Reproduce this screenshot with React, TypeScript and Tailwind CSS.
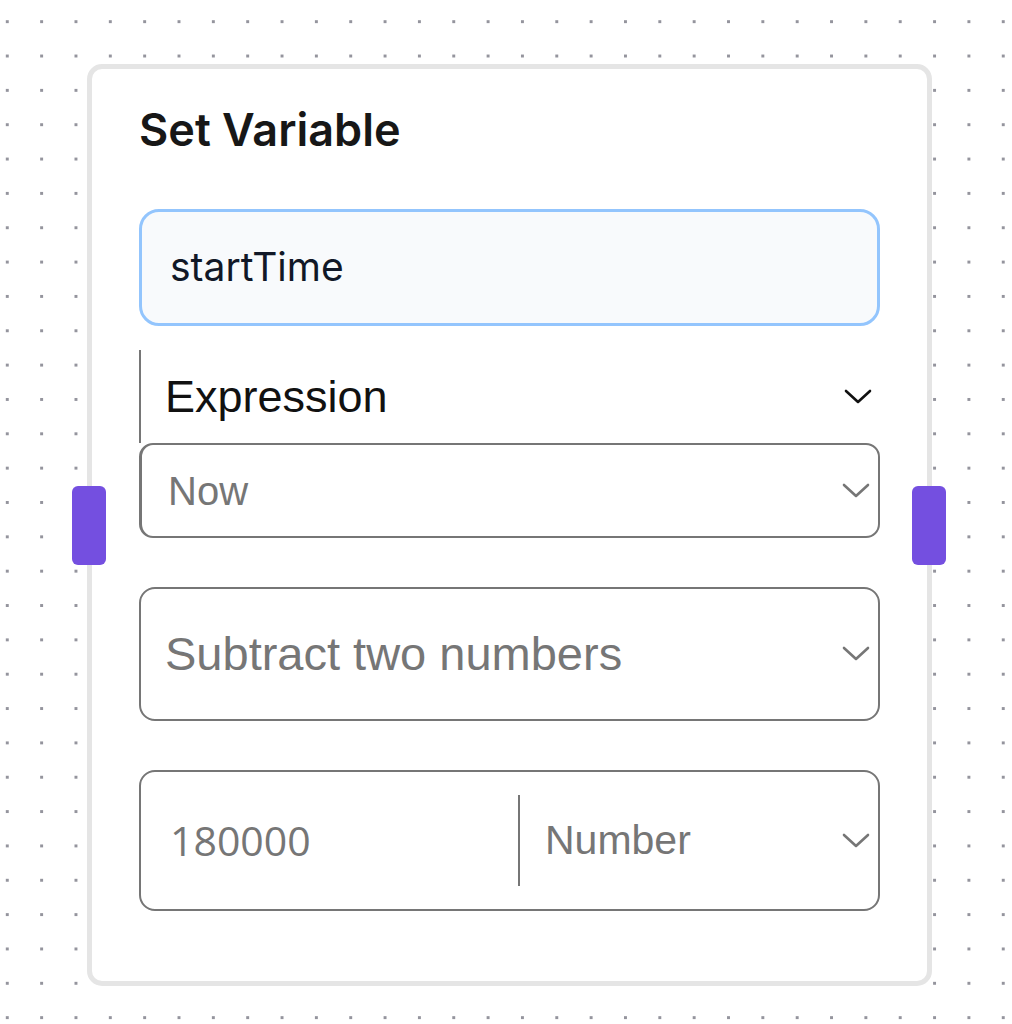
import type { ReactNode } from "react";

// Chevron used by the native-looking selects in the node.
function Chevron({ dark = false }: { dark?: boolean }) {
  return (
    <svg width="28" height="16" viewBox="0 0 28 16" fill="none" className="shrink-0">
      <polyline
        points="2,2 14,13 26,2"
        stroke={dark ? "#111111" : "#767676"}
        strokeWidth="2.6"
        strokeLinecap="round"
        strokeLinejoin="round"
      />
    </svg>
  );
}

function SelectBox({
  children,
  className,
  textClass,
}: {
  children: ReactNode;
  className: string;
  textClass: string;
}) {
  return (
    <div
      className={[
        "flex items-center justify-between border-2 border-[#767676] bg-white",
        className,
      ].join(" ")}
    >
      <span className={textClass}>{children}</span>
      <Chevron />
    </div>
  );
}

export default function App() {
  return (
    <div className="h-[1024px] w-[1012px] overflow-hidden bg-white bg-[radial-gradient(circle,#94949d_1.6px,transparent_1.9px)] bg-[length:34.35px_34.35px] bg-[position:-9.9px_4.5px] pl-[87px] pt-[64px] font-['Liberation_Sans',Arial,sans-serif]">
      <div className="relative h-[922px] w-[845px] rounded-[15px] border-[5px] border-[#e5e5e5] bg-white px-[47px] pt-[37px]">
        {/* connection handles */}
        <div className="absolute left-[-20px] top-[417px] h-[79px] w-[34px] rounded-[6px] bg-[#744fe0]" />
        <div className="absolute right-[-19px] top-[417px] h-[79px] w-[34px] rounded-[6px] bg-[#744fe0]" />

        <h1 className="h-[48px] font-['Inter',sans-serif] text-[45px] leading-[48px] font-semibold text-[#171717]">
          Set Variable
        </h1>

        <div className="mt-[55px] flex h-[117px] items-center rounded-[20px] border-[3px] border-[#93c5fd] bg-[#f8fafc] pl-[28px] font-['Inter',sans-serif] text-[39px] text-[#111827]">
          startTime
        </div>

        <div className="mt-[24px] flex h-[93px] items-center justify-between border-l-2 border-[#767676] pr-[8px] pl-[24px]">
          <span className="text-[45px] text-[#111111]">Expression</span>
          <Chevron dark />
        </div>

        <SelectBox
          className="h-[95px] rounded-[14px] border-l-[3px] pr-[8px] pl-[26px]"
          textClass="text-[40px] text-[#767676]"
        >
          Now
        </SelectBox>

        <SelectBox
          className="mt-[49px] h-[134px] rounded-[16px] pr-[8px] pl-[24px]"
          textClass="text-[47px] text-[#767676]"
        >
          Subtract two numbers
        </SelectBox>

        <div className="mt-[49px] flex h-[141px] items-center rounded-[16px] border-2 border-[#767676]">
          <span className="w-[377px] pl-[29px] font-['Open_Sans',sans-serif] text-[41px] text-[#767676]">
            180000
          </span>
          <div className="h-[91px] w-[2px] bg-[#767676]" />
          <div className="flex flex-1 items-center justify-between pr-[8px] pl-[25px]">
            <span className="text-[41px] text-[#767676]">Number</span>
            <Chevron />
          </div>
        </div>
      </div>
    </div>
  );
}
